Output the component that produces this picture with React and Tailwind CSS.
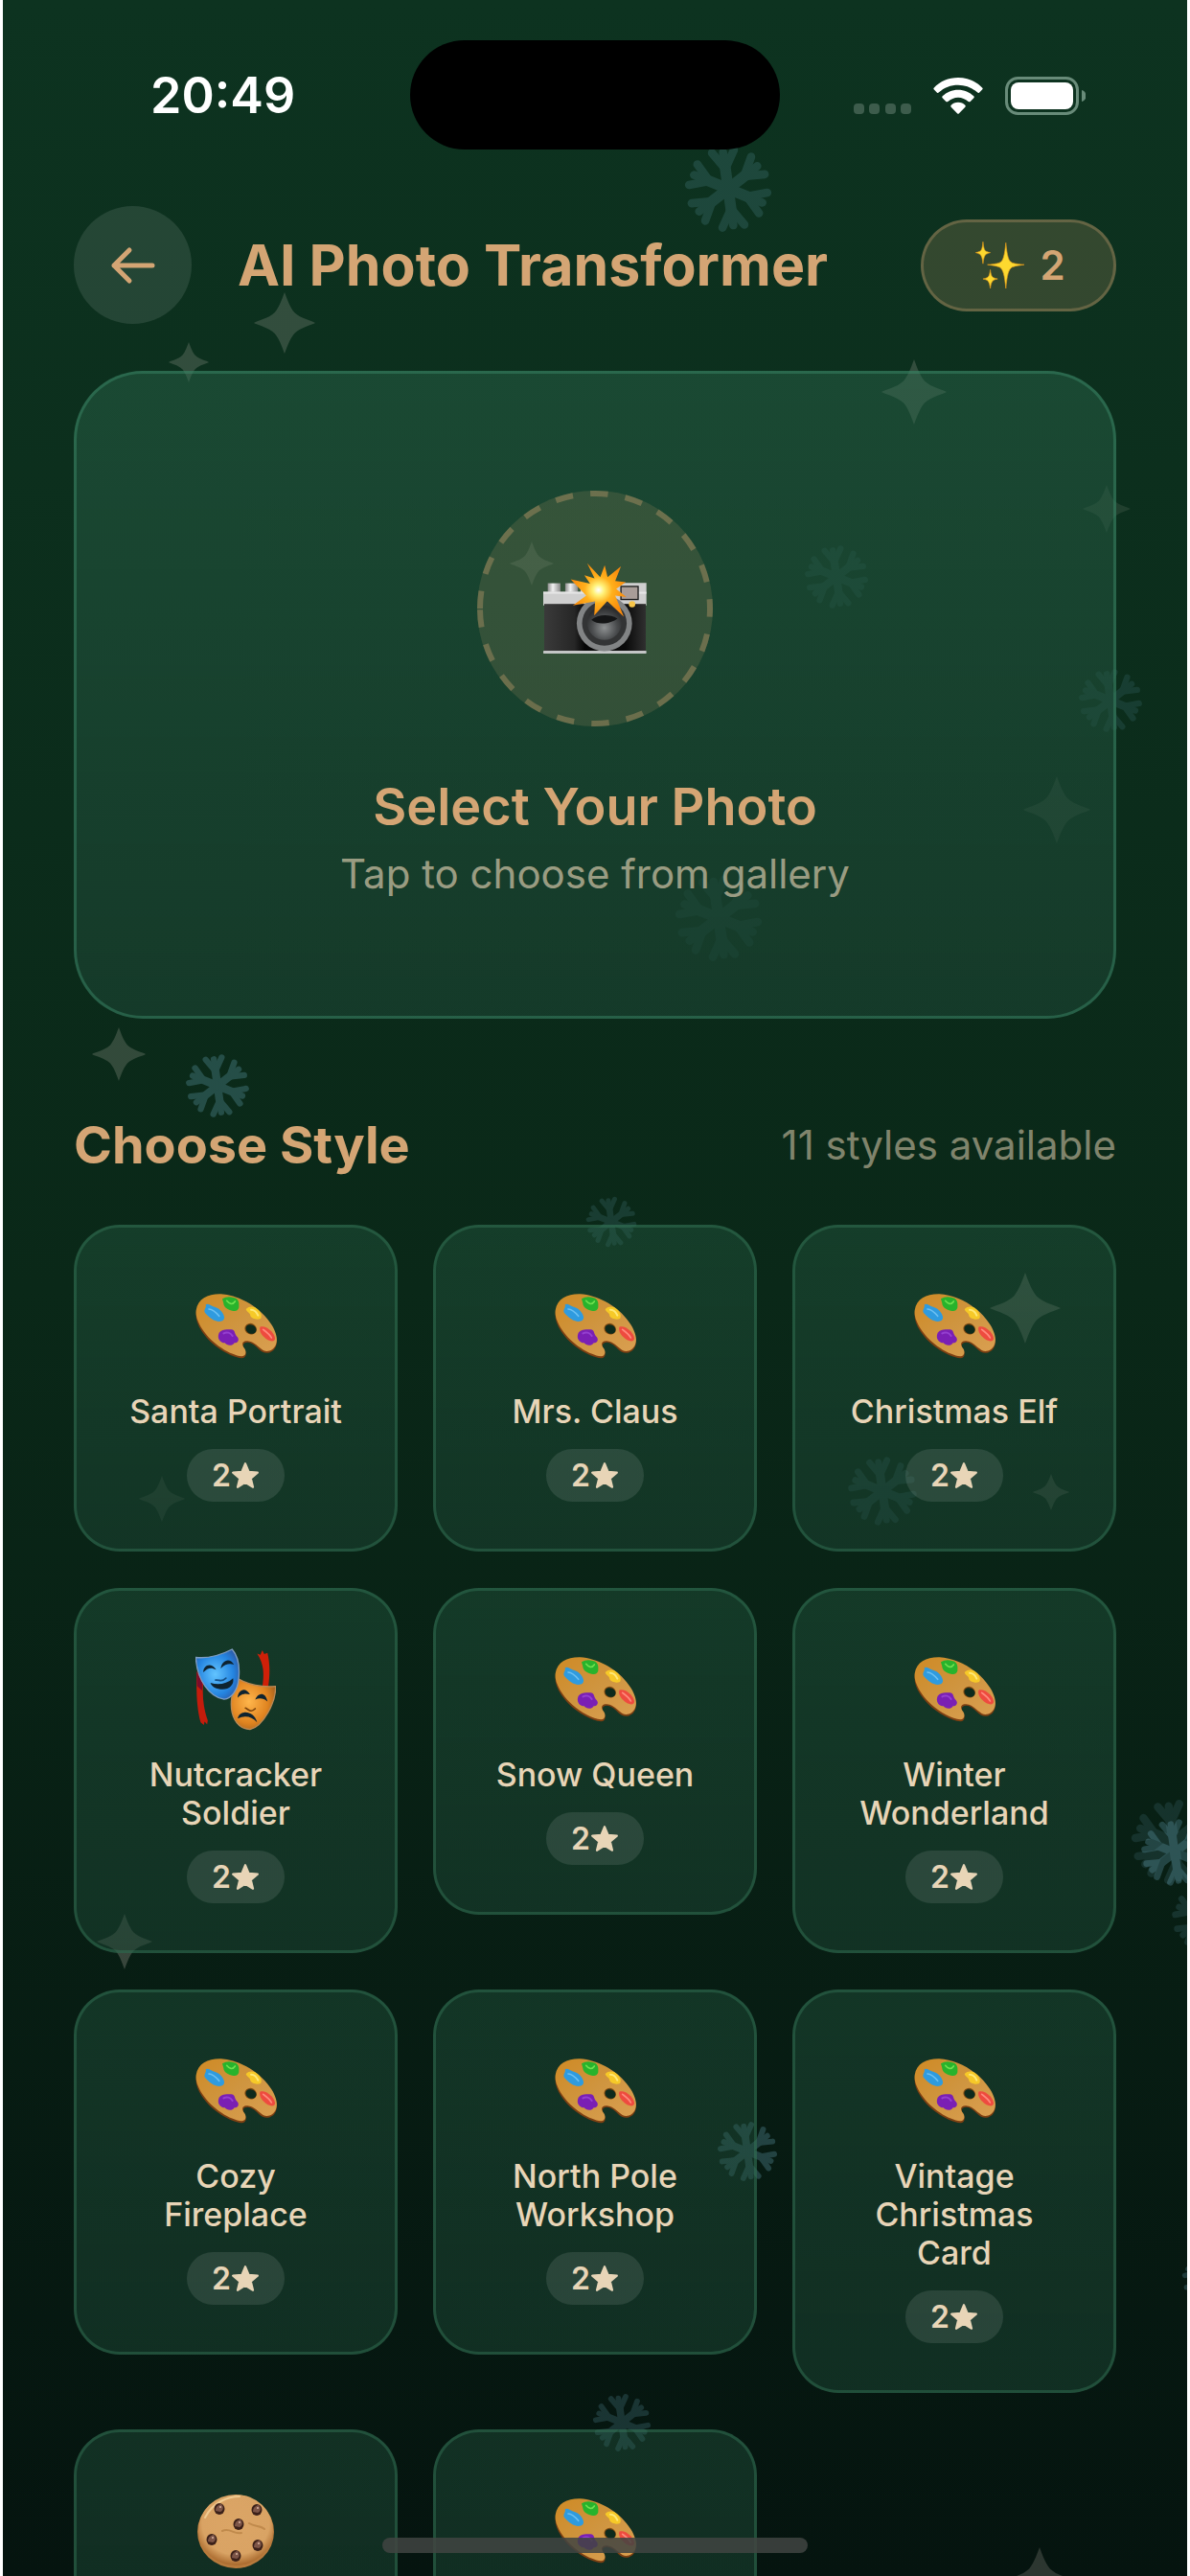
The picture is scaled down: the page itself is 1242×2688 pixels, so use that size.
import React from "react";

const STARS = [
  { x: 297, y: 337, size: 64, opacity: 0.16 },
  { x: 197, y: 378, size: 42, opacity: 0.16 },
  { x: 954, y: 409, size: 68, opacity: 0.16 },
  { x: 1155, y: 531, size: 50, opacity: 0.09 },
  { x: 1103, y: 845, size: 70, opacity: 0.1 },
  { x: 555, y: 588, size: 46, opacity: 0.16 },
  { x: 124, y: 1100, size: 56, opacity: 0.17 },
  { x: 1070, y: 1365, size: 74, opacity: 0.17 },
  { x: 1097, y: 1557, size: 38, opacity: 0.14 },
  { x: 169, y: 1564, size: 48, opacity: 0.1 },
  { x: 130, y: 2026, size: 58, opacity: 0.2 },
  { x: 1085, y: 2692, size: 68, opacity: 0.16 },
];

const FLAKES = [
  { x: 760, y: 197, size: 96, opacity: 0.17 },
  { x: 873, y: 602, size: 70, opacity: 0.1 },
  { x: 1159, y: 731, size: 70, opacity: 0.12 },
  { x: 750, y: 958, size: 96, opacity: 0.1 },
  { x: 227, y: 1133, size: 70, opacity: 0.26 },
  { x: 638, y: 1275, size: 56, opacity: 0.14 },
  { x: 921, y: 1556, size: 76, opacity: 0.15 },
  { x: 1225, y: 1922, size: 94, opacity: 0.13 },
  { x: 1226, y: 1933, size: 74, opacity: 0.26 },
  { x: 1258, y: 2001, size: 74, opacity: 0.14 },
  { x: 780, y: 2245, size: 66, opacity: 0.26 },
  { x: 1263, y: 2377, size: 62, opacity: 0.22 },
  { x: 649, y: 2528, size: 64, opacity: 0.19 },
];

const STYLES = [
  { name: "Santa Portrait", icon: "palette" },
  { name: "Mrs. Claus", icon: "palette" },
  { name: "Christmas Elf", icon: "palette" },
  { name: "Nutcracker Soldier", icon: "masks" },
  { name: "Snow Queen", icon: "palette" },
  { name: "Winter Wonderland", icon: "palette" },
  { name: "Cozy Fireplace", icon: "palette" },
  { name: "North Pole Workshop", icon: "palette" },
  { name: "Vintage Christmas Card", icon: "palette" },
  { icon: "cookie" },
  { icon: "palette" },
];

const place = ({ x, y, size, opacity }) => ({
  left: x - 3 - size / 2,
  top: y - size / 2,
  width: size,
  height: size,
  opacity,
});

function Backdrop() {
  return (
    <div aria-hidden="true" className="absolute inset-0 overflow-hidden">
      {STARS.map((s) => (
        <svg key={`${s.x}-${s.y}`} viewBox="0 0 100 100" className="absolute text-[#f5e6dc]" style={place(s)}>
          <path
            d="M50 0C52 5 58 24 66 33C76 43 96 47 100 50C96 53 76 57 66 67C58 76 52 95 50 100C48 95 42 76 34 67C24 57 4 53 0 50C4 47 24 43 34 33C42 24 48 5 50 0Z"
            fill="currentColor"
          />
        </svg>
      ))}
      {FLAKES.map((f) => (
        <svg key={`${f.x}-${f.y}`} viewBox="0 0 100 100" className="absolute text-[#72b4cc]" style={place(f)}>
          <g stroke="currentColor" strokeWidth="9" strokeLinecap="round" strokeLinejoin="round" fill="none" transform="rotate(-8 50 50)">
            {[0, 60, 120, 180, 240, 300].map((a) => (
              <g key={a} transform={`rotate(${a} 50 50)`}>
                <path d="M50 50V10" />
                <path d="M38 9L50 28L62 9" />
                <path d="M50 50V24" strokeWidth="12" />
              </g>
            ))}
          </g>
        </svg>
      ))}
    </div>
  );
}

function Palette() {
  return (
    <svg viewBox="0 0 255 204" className="w-[85px]" aria-hidden="true">
      <defs>
        <linearGradient id="wood" x1="0" y1="0" x2="1" y2="1">
          <stop offset="0" stopColor="#cf8a24" />
          <stop offset="0.5" stopColor="#cf9540" />
          <stop offset="1" stopColor="#dba052" />
        </linearGradient>
      </defs>
      <path
        d="M2 60C8 20 40 4 80 4C130 8 190 38 225 83C250 113 260 143 252 165C244 184 224 190 210 182C194 172 184 154 164 152C148 152 146 162 154 175C162 188 158 201 145 202C108 198 50 164 20 118C6 96 0 78 2 60Z"
        fill="#7d3f12"
      />
      <path
        d="M2 52C8 14 40 0 80 1C130 4 190 34 225 79C250 109 260 139 252 159C244 178 226 184 212 177C195 167 185 150 163 148C145 147 143 159 154 172C161 183 157 195 145 196C110 193 52 158 22 112C7 88 0 70 2 52Z"
        fill="url(#wood)"
      />
      <ellipse cx="173" cy="110" rx="19" ry="17" fill="#7d4a14" transform="rotate(25 173 110)" />
      <ellipse cx="174" cy="111" rx="17" ry="14" fill="#0d2a1c" transform="rotate(25 174 111)" />
      <path d="M32 34C42 28 50 40 62 42C76 46 88 60 90 72C92 86 76 90 62 84C48 80 38 68 30 60C24 50 36 44 32 34Z" fill="#2f9bdf" />
      <path d="M42 48C52 48 64 58 74 70" stroke="#6cc0f2" strokeWidth="5" strokeLinecap="round" fill="none" />
      <path d="M84 16C94 10 106 8 118 12C130 12 138 24 136 38C138 52 122 58 110 52C98 48 88 40 88 30Z" fill="#28b32c" />
      <path d="M98 22C106 32 116 36 124 24" stroke="#6fe04f" strokeWidth="5" strokeLinecap="round" fill="none" />
      <path d="M158 48C168 38 184 38 194 48C204 56 210 70 204 78C194 82 178 80 172 70C172 58 160 58 158 48Z" fill="#f6c928" />
      <path d="M174 50C184 50 192 58 196 68" stroke="#ffe978" strokeWidth="6" strokeLinecap="round" fill="none" />
      <path d="M202 104C212 100 226 106 238 118C248 130 254 144 244 148C230 150 216 138 208 128C202 120 200 112 202 104Z" fill="#ee4b3f" />
      <path d="M212 112C220 118 232 126 238 138" stroke="#ff8a7c" strokeWidth="5" strokeLinecap="round" fill="none" />
      <path d="M74 122C84 108 102 112 112 112C124 112 122 124 128 132C140 142 134 154 122 154C114 166 98 162 92 154C78 154 66 140 74 122Z" fill="#7a1fb4" />
      <path d="M88 124C98 118 110 122 116 132" stroke="#953fd0" strokeWidth="6" strokeLinecap="round" fill="none" />
    </svg>
  );
}

function Masks() {
  return (
    <svg viewBox="0 0 248 252" className="w-[84px]" aria-hidden="true">
      <defs>
        <radialGradient id="happy" cx="0.45" cy="0.5" r="0.6">
          <stop offset="0" stopColor="#62c4ff" />
          <stop offset="0.7" stopColor="#2484e0" />
          <stop offset="1" stopColor="#2c5fae" />
        </radialGradient>
        <radialGradient id="sad" cx="0.4" cy="0.45" r="0.65">
          <stop offset="0" stopColor="#ffb64c" />
          <stop offset="0.65" stopColor="#e08420" />
          <stop offset="1" stopColor="#a4611f" />
        </radialGradient>
      </defs>
      <path d="M4 70L24 106C20 150 26 190 38 222L36 234L28 226L26 236L16 228C4 190 2 130 4 70Z" fill="#c41c0c" />
      <path d="M4 72L22 108L20 130L5 116Z" fill="#7a0d2c" />
      <path d="M190 16L200 20L206 6L212 18L222 14C230 50 230 80 224 120H206C212 80 212 50 190 16Z" fill="#cf2008" />
      <path d="M132 94C170 116 205 120 247 117C248 165 210 240 168 250C126 248 104 205 112 150Z" fill="url(#sad)" stroke="#bb8a55" strokeWidth="4" />
      <path d="M1 28C40 32 80 20 113 3C132 25 137 60 133 95C130 130 110 155 88 157C45 150 5 100 1 28Z" fill="url(#happy)" stroke="#7f9cc0" strokeWidth="4" />
      <g fill="#0e2330">
        <path d="M24 74C24 54 46 40 64 66C48 58 38 60 24 74Z" />
        <path d="M78 62C80 40 104 24 119 50C104 46 92 48 78 62Z" />
        <path d="M46 106C70 114 96 110 116 92C120 112 104 126 84 126C64 126 50 118 46 106Z" />
        <path d="M130 152C130 132 152 114 168 142C152 138 142 140 130 152Z" />
        <path d="M184 158C192 136 216 132 222 164C210 154 198 152 184 158Z" />
        <path d="M130 216C136 188 180 190 190 228C172 208 152 206 130 216Z" />
      </g>
      <path d="M62 98C74 96 80 106 94 92" stroke="#155087" strokeWidth="5" strokeLinecap="round" fill="none" />
      <path d="M154 184C164 188 170 200 184 186" stroke="#7b430c" strokeWidth="5" strokeLinecap="round" fill="none" />
    </svg>
  );
}

function Cookie() {
  const chips = [[23, 15], [62, 16], [43, 31], [15, 47], [63, 53], [40, 64]];
  return (
    <svg viewBox="0 0 80 77" className="w-20" aria-hidden="true">
      <defs>
        <radialGradient id="dough" cx="0.5" cy="0.4" r="0.6">
          <stop offset="0" stopColor="#dba566" />
          <stop offset="0.75" stopColor="#d9a364" />
          <stop offset="1" stopColor="#a8682c" />
        </radialGradient>
      </defs>
      <ellipse cx="40" cy="39" rx="40" ry="38" fill="#b87a3c" />
      <ellipse cx="40" cy="37" rx="39" ry="37" fill="url(#dough)" />
      <path d="M8 24C16 8 32 2 44 2" stroke="#f0cb91" strokeWidth="2" fill="none" strokeLinecap="round" />
      <path d="M26 38C34 34 38 42 46 40M54 30C60 34 66 32 70 36" stroke="#c08a4c" strokeWidth="2" fill="none" strokeLinecap="round" />
      {chips.map(([x, y]) => (
        <g key={`${x}-${y}`}>
          <ellipse cx={x} cy={y} rx="5.500" ry="6" fill="#3b2019" />
          <path d={`M${x - 4} ${y + 2}C${x - 4} ${y - 3} ${x} ${y - 5} ${x + 2} ${y - 5}C${x + 5} ${y - 2} ${x + 4} ${y + 2} ${x + 1} ${y + 3}Z`} fill="#7d5548" />
          <circle cx={x + 1} cy={y - 2} r="1" fill="#d9b5a2" />
        </g>
      ))}
    </svg>
  );
}

function Camera() {
  return (
    <svg viewBox="315 320 325 288" className="w-[108px]" aria-hidden="true">
      <defs>
        <linearGradient id="body" x1="0" y1="0" x2="1" y2="0">
          <stop offset="0" stopColor="#3a3a3a" />
          <stop offset="0.3" stopColor="#262626" />
          <stop offset="0.4" stopColor="#050505" />
          <stop offset="0.8" stopColor="#0a0a0a" />
          <stop offset="1" stopColor="#303030" />
        </linearGradient>
        <linearGradient id="knob" x1="0" y1="0" x2="1" y2="0">
          <stop offset="0" stopColor="#8c8c8c" />
          <stop offset="0.4" stopColor="#f2f2f2" />
          <stop offset="1" stopColor="#8a8a8a" />
        </linearGradient>
        <radialGradient id="flash" cx="0.5" cy="0.5" r="0.5">
          <stop offset="0" stopColor="#ffffff" />
          <stop offset="0.2" stopColor="#fff27a" />
          <stop offset="0.5" stopColor="#ffb01c" />
          <stop offset="1" stopColor="#f98a0c" />
        </radialGradient>
        <radialGradient id="glass" cx="0.5" cy="0.65" r="0.6">
          <stop offset="0" stopColor="#8d9091" />
          <stop offset="0.6" stopColor="#4b4d4f" />
          <stop offset="1" stopColor="#2a2b2c" />
        </radialGradient>
      </defs>
      <rect x="329" y="385" width="40" height="34" fill="url(#knob)" />
      <rect x="384" y="385" width="40" height="34" fill="url(#knob)" />
      <path d="M432 392H520V384H639V455H315V412H432Z" fill="#cfcfcf" />
      <rect x="315" y="412" width="324" height="6" fill="#e6e6e6" />
      <rect x="318" y="450" width="319" height="148" fill="url(#body)" />
      <rect x="315" y="597" width="324" height="9" rx="2" fill="#c4c6c6" />
      <rect x="559" y="395" width="54" height="41" fill="#a99d98" stroke="#1c1c1c" strokeWidth="4" />
      <circle cx="594" cy="451" r="10" fill="#f8c64a" />
      <circle cx="507" cy="511" r="87" fill="#828485" />
      <circle cx="507" cy="511" r="70" fill="#333435" />
      <circle cx="507" cy="509" r="54" fill="url(#glass)" />
      <path d="M466 500C485 484 520 480 548 496C530 510 490 520 466 500Z" fill="#141516" />
      <path
        d="M508 328L517 366L559 332L541 378L574 382L544 403L576 428L541 424L568 490L516 441L475 486L478 442L408 455L450 424L401 373L462 386L444 360L476 370L453 322L494 366Z"
        fill="url(#flash)"
      />
    </svg>
  );
}

function Sparkles() {
  return (
    <svg viewBox="446 578 154 150" className="w-[51px]" aria-hidden="true">
      <g fill="#fdd92f" stroke="#e39a1c" strokeWidth="2">
        <path d="M542 582C546 622 550 640 562 645C572 649 588 650 600 651C588 653 572 654 562 659C550 665 546 686 542 726C538 686 534 665 522 659C512 654 496 653 484 651C496 650 512 649 522 645C534 640 538 622 542 582Z" />
        <path d="M470 579C472 600 475 606 480 609C484 611 488 612 493 613C488 615 484 616 480 618C475 622 472 630 470 648C468 630 465 622 460 618C456 616 452 615 447 613C452 612 456 611 460 609C465 606 468 600 470 579Z" />
        <path d="M493 667C495 684 498 689 503 692C507 694 511 695 516 696C511 697 507 698 503 700C498 704 495 710 493 727C491 710 488 704 483 700C479 698 475 697 470 696C475 695 479 694 483 692C488 689 491 684 493 667Z" />
      </g>
    </svg>
  );
}

const ICONS = { palette: Palette, masks: Masks, cookie: Cookie };

function StatusBar() {
  return (
    <div className="flex h-[200px] items-start justify-between px-[106px]">
      <time className="w-[276px] pt-[68px] pl-12 text-[52px] leading-16 font-semibold text-white">20:49</time>
      <div className="mt-[42px] h-[114px] w-[386px] rounded-full bg-black" />
      <div className="flex w-[276px] items-center justify-end gap-[23px] pt-20">
        <svg viewBox="0 0 60 40" className="h-10 w-[60px]" aria-label="No signal">
          {[0, 16, 33, 49].map((x) => (
            <rect key={x} x={x} y="28" width="11" height="11" rx="4" fill="#3d5c4c" />
          ))}
        </svg>
        <svg viewBox="306 60 154 120" className="h-10 w-[52px]" aria-label="Wi-Fi">
          <g fill="#ffffff">
            <path d="M383 63C413 63 440 75 459 95Q461 98 459 100L449 110Q446 112 443 109C427 94 406 86 383 86C360 86 339 94 323 109Q320 112 317 110L307 100Q305 98 307 95C326 75 353 63 383 63Z" />
            <path d="M383 101C402 101 419 108 432 121Q435 124 432 127L421 138Q418 140 415 138C406 130 395 125 383 125C371 125 360 130 351 138Q348 140 345 138L334 127Q331 124 334 121C347 108 364 101 383 101Z" />
            <path d="M383 140C392 140 400 143 405 149Q408 152 405 155L386 175Q383 178 380 175L361 155Q358 152 361 149C366 143 374 140 383 140Z" />
          </g>
        </svg>
        <svg viewBox="0 0 84 40" className="h-10 w-[84px]" aria-label="Battery full">
          <rect x="1.500" y="1.500" width="74" height="37" rx="12" fill="none" stroke="#688b79" strokeWidth="3" />
          <rect x="6" y="6" width="65" height="28" rx="8" fill="#ffffff" />
          <path d="M80 14C83 15 84.500 17 84.500 20C84.500 23 83 25 80 26Z" fill="#688b79" />
        </svg>
      </div>
    </div>
  );
}

function StyleCard({ name, icon }) {
  const Icon = ICONS[icon];
  return (
    <button
      type="button"
      className="flex min-h-[341px] flex-col items-center rounded-[48px] border-3 border-[#3a8060]/40 bg-[linear-gradient(180deg,rgba(45,106,79,0.32),rgba(27,67,50,0.55))] bg-origin-border px-12 py-[49px]"
    >
      <span className="mb-[15px] flex h-[108px] items-center justify-center">
        <Icon />
      </span>
      {name && (
        <>
          <span className="mb-[19px] text-center text-[34px] leading-10 font-medium text-[#e8d5b7]">{name}</span>
          <span className="flex h-[55px] items-center rounded-full bg-white/10 px-[26px] text-[32px] font-semibold text-[#e8d5b7]">
            2
            <svg viewBox="0 0 28 28" className="size-[30px]" role="img" aria-label="stars">
              <path
                d="M14 2L17.400 10.200L26 10.800L19.400 16.400L21.500 25L14 20.300L6.500 25L8.600 16.400L2 10.800L10.600 10.200Z"
                fill="currentColor"
                stroke="currentColor"
                strokeWidth="2"
                strokeLinejoin="round"
              />
            </svg>
          </span>
        </>
      )}
    </button>
  );
}

export default function App() {
  return (
    <div className="h-screen bg-white px-[3px] font-['Inter','Liberation_Sans',sans-serif]">
      <main className="relative h-full overflow-hidden bg-[linear-gradient(180deg,#0d3320_0%,#0a2818_50%,#05140f_100%)]">
        <Backdrop />
        <div className="relative">
          <StatusBar />
          <div className="px-[74px] pt-[15px]">
            <header className="flex items-center gap-12">
              <button type="button" aria-label="Back" className="flex size-[123px] shrink-0 items-center justify-center rounded-full bg-white/10">
                <svg viewBox="0 0 48 40" className="h-10 w-12" fill="none" stroke="#d4a574" strokeWidth="5" strokeLinecap="round" strokeLinejoin="round">
                  <path d="M44 20H4M20 4L4 20L20 36" />
                </svg>
              </button>
              <h1 className="flex-1 text-[59px] leading-18 font-bold whitespace-nowrap text-[#d4a574]">AI Photo Transformer</h1>
              <div className="flex h-24 w-[204px] shrink-0 items-center justify-center gap-4 rounded-full border-3 border-[#d4a574]/30 bg-[#d4a574]/20 pl-1 text-[42px] font-semibold text-[#d4a574]">
                <Sparkles />2
              </div>
            </header>

            <button
              type="button"
              className="mt-[49px] flex w-full flex-col items-center rounded-[72px] border-3 border-[#3f8f6c]/45 bg-[linear-gradient(180deg,rgba(45,106,79,0.44),rgba(27,67,50,0.65))] bg-origin-border py-[122px]"
            >
              <span className="relative flex size-[246px] items-center justify-center rounded-full bg-[#d4a574]/15">
                <svg viewBox="0 0 246 246" className="absolute inset-0" aria-hidden="true">
                  <circle cx="123" cy="123" r="120" fill="none" stroke="#d4a574" strokeOpacity="0.35" strokeWidth="6" strokeDasharray="18.5 18.2" transform="rotate(180 123 123)" />
                </svg>
                <Camera />
              </span>
              <span className="mt-[52px] text-[54px] leading-16 font-semibold text-[#d4a574]">Select Your Photo</span>
              <span className="mt-3 text-[42px] leading-13 text-[#e8d5b7]/65">Tap to choose from gallery</span>
            </button>

            <div className="mt-[99px] mb-[50px] flex items-center justify-between">
              <h2 className="text-[54px] leading-[66px] font-bold text-[#d4a574]">Choose Style</h2>
              <p className="text-[42px] leading-[66px] text-[#e8d5b7]/55">11 styles available</p>
            </div>

            <div className="grid grid-cols-3 items-start gap-x-[37px] gap-y-[38px]">
              {STYLES.map((s, i) => (
                <StyleCard key={i} {...s} />
              ))}
            </div>
          </div>
        </div>
        <div className="absolute bottom-6 left-1/2 h-4 w-[444px] -translate-x-1/2 rounded-full bg-[#414442]/85" />
      </main>
    </div>
  );
}
